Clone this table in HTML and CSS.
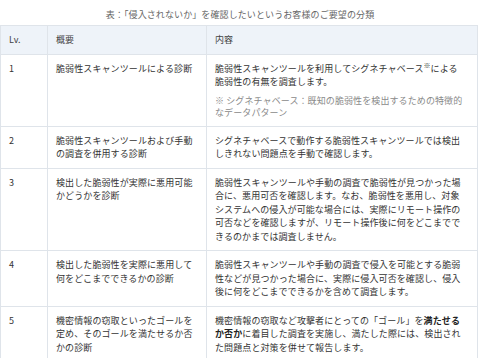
FILE: index.html
```html
<!DOCTYPE html>
<html lang="ja">
<head>
<meta charset="utf-8">
<link rel="stylesheet" href="styles.css">
</head>
<body>
<p class="caption">表：「侵入されないか」を確認したいというお客様のご要望の分類</p>
<table class="levels">
  <colgroup>
    <col class="c-lv">
    <col class="c-sum">
    <col class="c-body">
  </colgroup>
  <thead>
    <tr><th>Lv.</th><th>概要</th><th>内容</th></tr>
  </thead>
  <tbody>
    <tr>
      <td>1</td>
      <td>脆弱性スキャンツールによる診断</td>
      <td>脆弱性スキャンツールを利用してシグネチャベース<sup>※</sup>による脆弱性の有無を調査します。<p class="note">※ シグネチャベース：既知の脆弱性を検出するための特徴的なデータパターン</p></td>
    </tr>
    <tr>
      <td>2</td>
      <td>脆弱性スキャンツールおよび手動の調査を併用する診断</td>
      <td>シグネチャベースで動作する脆弱性スキャンツールでは検出しきれない問題点を手動で確認します。</td>
    </tr>
    <tr>
      <td>3</td>
      <td>検出した脆弱性が実際に悪用可能かどうかを診断</td>
      <td>脆弱性スキャンツールや手動の調査で脆弱性が見つかった場合に、悪用可否を確認します。なお、脆弱性を悪用し、対象システムへの侵入が可能な場合には、実際にリモート操作の可否などを確認しますが、リモート操作後に何をどこまでできるのかまでは調査しません。</td>
    </tr>
    <tr>
      <td>4</td>
      <td>検出した脆弱性を実際に悪用して何をどこまでできるかの診断</td>
      <td>脆弱性スキャンツールや手動の調査で侵入を可能とする脆弱性などが見つかった場合に、実際に侵入可否を確認し、侵入後に何をどこまでできるかを含めて調査します。</td>
    </tr>
    <tr>
      <td>5</td>
      <td>機密情報の窃取といったゴールを定め、そのゴールを満たせるか否かの診断</td>
      <td>機密情報の窃取など攻撃者にとっての「ゴール」を<strong>満たせるか否か</strong>に着目した調査を実施し、満たした際には、検出された問題点と対策を併せて報告します。</td>
    </tr>
  </tbody>
</table>
</body>
</html>
```

FILE: styles.css
```css
html, body {
  margin: 0;
  padding: 0;
  background: #ffffff;
}
body {
  font-family: "Noto Sans CJK JP", "Noto Sans", sans-serif;
  font-size: 9px;
  color: #333333;
  letter-spacing: 0.1px;
}
.caption {
  margin: 0;
  padding: 8px 0 4px;
  line-height: 13px;
  text-align: center;
  color: #666666;
}
.levels {
  border-collapse: collapse;
  width: 477px;
  table-layout: fixed;
}
.c-lv { width: 47px; }
.c-sum { width: 159px; }
.c-body { width: 271px; }
.levels th,
.levels td {
  border: 1px solid #dfe4ea;
  padding: 7px 8px;
  line-height: 13.5px;
  text-align: left;
  vertical-align: top;
  font-weight: normal;
}
.levels td:last-child,
.levels th:last-child {
  padding-right: 12px;
}
.levels th {
  background: #eef3f9;
  color: #444444;
}
.levels sup {
  font-size: 7px;
  line-height: 0;
  vertical-align: 4px;
}
.levels strong {
  font-weight: bold;
  color: #222222;
}
.note {
  margin: 6px 0 0;
  line-height: 12px;
  color: #8a8a8a;
}
```
